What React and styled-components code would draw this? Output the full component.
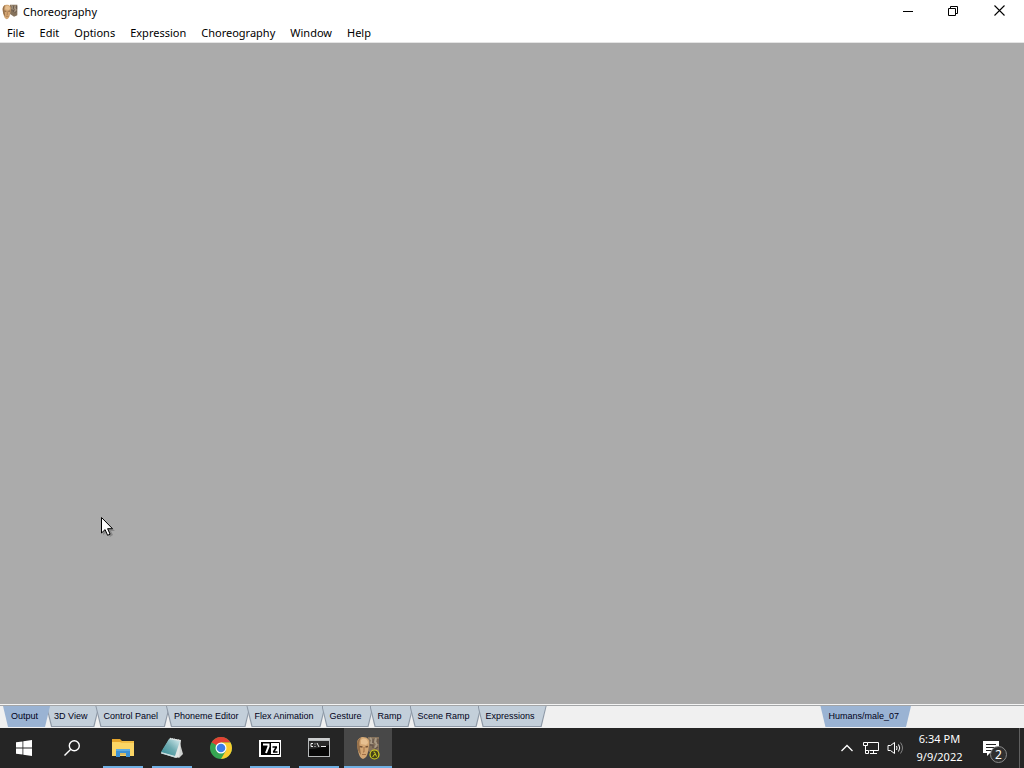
import React, { useState } from 'react';
import styled, { createGlobalStyle } from 'styled-components';

const GlobalStyle = createGlobalStyle`
  * {
    box-sizing: border-box;
  }
  body {
    margin: 0;
    overflow: hidden;
  }
  button {
    margin: 0;
    padding: 0;
    border: none;
    background: none;
    font: inherit;
    color: inherit;
  }
  svg {
    display: block;
  }
`;

const Desktop = styled.div`
  display: flex;
  flex-direction: column;
  height: 100vh;
  font-family: 'Noto Sans', 'Open Sans', sans-serif;
  font-size: 11px;
  color: #000;
  background: #fff;
`;

/* Title bar */

const TitleBar = styled.header`
  display: flex;
  align-items: center;
  height: 23px;
  padding: 0 1px 0 2px;
`;

const Title = styled.h1`
  flex: 1;
  margin: 0 0 0 5px;
  font-size: 11px;
  font-weight: 400;
  line-height: 22px;
`;

const WindowButton = styled.button`
  display: flex;
  justify-content: center;
  align-items: center;
  align-self: flex-start;
  width: ${props => props.$width || 45}px;
  height: 21px;
  &:hover {
    background: #e5e5e5;
  }
`;

const MenuBar = styled.nav`
  display: flex;
  gap: 1px;
  height: 20px;
  border-bottom: 1px solid #e4e4e4;
`;

const MenuItem = styled.button`
  padding: 0 7px;
  line-height: 19px;
  &:hover {
    background: #e5f3ff;
  }
`;

/* Work area */

const Workspace = styled.main`
  position: relative;
  flex: 1;
  background: #ababab;
`;

const Pointer = styled.svg`
  position: absolute;
  left: 100px;
  top: 473px;
`;

const TabStrip = styled.div`
  display: flex;
  justify-content: space-between;
  height: 24px;
  padding: 0 113px 0 3px;
  border-top: 1px solid #f4f4f4;
  background: #f0f0f0;
  box-shadow: inset 0 1px 0 #a4a6a8;
`;

const TabGroup = styled.div`
  display: flex;
  height: 22px;
  padding-top: 1px;
`;

const Tab = styled.button`
  position: relative;
  height: 21px;
  padding: 0 12px 2px 8px;
  margin-right: ${props => (props.$last ? 0 : -4)}px;
  font-family: 'Liberation Sans', Arial, sans-serif;
  font-size: 9px;
  line-height: 18px;
  white-space: nowrap;
  color: #000018;
  background: ${props => (props.$active ? '#9ab3d3' : '#8d98a6')};
  clip-path: polygon(0 0, 100% 0, calc(100% - 5px) 100%, 5px 100%);
  z-index: ${props => (props.$active ? 1 : 0)};
  isolation: isolate;

  &::before {
    content: '';
    position: absolute;
    inset: 0 1px 1px 1px;
    z-index: -1;
    background: ${props => (props.$active ? '#9ab3d3' : '#c3cfda')};
    clip-path: polygon(0 0, 100% 0, calc(100% - 5px) 100%, 5px 100%);
  }
`;

/* Taskbar */

const Taskbar = styled.footer`
  display: flex;
  justify-content: space-between;
  height: 40px;
  color: #fff;
  background: #252525;
`;

const Apps = styled.div`
  display: flex;
`;

const Pinned = styled.div`
  display: flex;
  gap: 1px;
  margin-left: 3px;
`;

const TaskButton = styled.button`
  display: flex;
  justify-content: center;
  align-items: center;
  width: 48px;
  height: 40px;
  background: ${props => (props.$active ? '#484848' : 'transparent')};
  background-image: ${props =>
    props.$open || props.$active ? 'linear-gradient(#70b0e4, #70b0e4)' : 'none'};
  background-size: ${props => (props.$active ? '48px' : '40px')} 2px;
  background-position: bottom center;
  background-repeat: no-repeat;
`;

const Tray = styled.div`
  display: flex;
  align-items: center;
`;

const TrayButton = styled.button`
  display: flex;
  justify-content: center;
  align-items: center;
  width: 24px;
  height: 40px;
`;

const Clock = styled.button`
  width: 65px;
  line-height: 18px;
  text-align: center;
  white-space: nowrap;
`;

const Notifications = styled.button`
  position: relative;
  display: flex;
  align-items: center;
  width: 47px;
  height: 40px;
  padding-left: 11px;
`;

const Badge = styled.span`
  position: absolute;
  left: 18px;
  top: 18px;
  width: 17px;
  height: 17px;
  border: 1px solid #8a8a8a;
  border-radius: 50%;
  background: #303030;
  font-size: 12px;
  line-height: 15px;
  text-align: center;
`;

const ShowDesktop = styled.button`
  width: 5px;
  height: 40px;
  border-left: 1px solid #606060;
`;

const FaceIcon = ({ size, badge }) => (
  <svg width={size} height={size} viewBox="0 0 24 24">
    <path d="M12 1h11v16l-5 2-6-4z" fill="#85725c" />
    <path d="M14 2l2 2-1 3 2 2M20 2l-1 4 2 2-2 4" fill="none" stroke="#a99a86" strokeWidth="1.8" />
    <path d="M17 3v4M22 3v5M14 9h3v3M19 13l3-2" fill="none" stroke="#64534a" strokeWidth="1.3" />
    <path d="M1 8C1 3 4 1 7 1c5 0 7 3 6 8l-1 7c-1 4-2 6-5 7-3-1-4-4-5-8z" fill="#d3a673" />
    <path d="M1 8c0-3 2-6 4-6-2 3-2 6-1 10l1 7c-3-3-4-7-4-11z" fill="#96704a" />
    <path d="M5 4c3-3 7-1 7 3l-2 2-5-1z" fill="#e6bf90" />
    <path d="M3.500 10.500l3 .5M9.500 11l2.500-.5" stroke="#785437" strokeWidth="1.3" />
    <path d="M8 11v5H7M6 18.500h4" fill="none" stroke="#a27047" />
    {badge && (
      <g fill="none" stroke="#d6d51d">
        <circle cx="18.5" cy="18.5" r="4.5" fill="#45421b" strokeWidth="1.2" />
        <path d="M17.500 16h1l2 4.500M18.700 18l-2 3" />
      </g>
    )}
  </svg>
);

const MinimizeIcon = () => (
  <svg width="10" height="10" viewBox="0 0 10 10">
    <path d="M0 5.500h10" stroke="#000" />
  </svg>
);

const RestoreIcon = () => (
  <svg width="10" height="10" viewBox="0 0 10 10" fill="none" stroke="#000">
    <path d="M.5 2.500h7v7h-7zM2.500 2.500v-2h7v7h-2" />
  </svg>
);

const CloseIcon = () => (
  <svg width="11" height="11" viewBox="0 0 11 11">
    <path d="M.5.5l10 10M10.500.5l-10 10" stroke="#000" strokeWidth="1.1" />
  </svg>
);

const StartIcon = () => (
  <svg width="16" height="16" viewBox="0 0 16 16" fill="#fff">
    <path d="M0 2.300L6.500 1.400v6.200H0zM7.300 1.300L16 0v7.600H7.300zM0 8.400h6.500v6.200L0 13.700zM7.300 8.400H16V16l-8.700-1.300z" />
  </svg>
);

const SearchIcon = () => (
  <svg width="16" height="16" viewBox="0 0 16 16" fill="none" stroke="#fff" strokeWidth="1.4">
    <circle cx="10.300" cy="5.700" r="5" />
    <path d="M6.800 9.200L.5 15.500" />
  </svg>
);

const FolderIcon = () => (
  <svg width="24" height="24" viewBox="0 0 24 24">
    <path d="M1 3h8l2 2h12v14H1z" fill="#e5a52c" />
    <path d="M1 6h22v14H1z" fill="#fbd565" />
    <path d="M11 5h12v2H9z" fill="#f2bd45" />
    <path d="M5 13h14v8h-4v-4H9v4H5z" fill="#3c91d4" />
    <path d="M5 13h14v2H5z" fill="#5eabe0" />
    <path d="M9 17h6v2H9z" fill="#d8b964" />
  </svg>
);

const NotepadIcon = () => (
  <svg width="24" height="24" viewBox="0 0 24 24">
    <defs>
      <linearGradient id="page" x1="0" y1="1" x2="1" y2="0">
        <stop offset="0" stopColor="#328b94" />
        <stop offset=".5" stopColor="#6daab0" />
        <stop offset="1" stopColor="#d7edf0" />
      </linearGradient>
    </defs>
    <path d="M19 4l4 14-4 4-3-2z" fill="#cfd2d0" />
    <path d="M1 17l15 5 3-1 2-17-11-2z" fill="#e3e7e5" />
    <path d="M9 3l11 2-5 15L1 16z" fill="url(#page)" />
    <path d="M10 2.500l10 2" stroke="#d6dede" strokeWidth="1.5" strokeDasharray="1 1" />
    <path d="M1 17l14 4" stroke="#c4dcdf" />
  </svg>
);

const ChromeIcon = () => (
  <svg width="24" height="24" viewBox="0 0 24 24">
    <circle cx="12" cy="12" r="11" fill="#36a552" />
    <path d="M12 12L2.500 6.500A11 11 0 0 1 21.500 6.500H12z" fill="#e34133" />
    <path d="M12 6.500h9.500A11 11 0 0 1 12 23l5-8.500z" fill="#fccc2e" />
    <path d="M2.500 6.500L7.200 14.700 12 12z" fill="#36a552" />
    <circle cx="12" cy="12" r="5.500" fill="#fff" />
    <circle cx="12" cy="12" r="4.300" fill="#3d7de8" />
  </svg>
);

const SevenZipIcon = () => (
  <svg width="24" height="24" viewBox="0 0 24 24">
    <path d="M1 4h22v17H1z" fill="#fff" />
    <path d="M3 6h10v13H3z" fill="#000" />
    <path d="M5 8.500h5.500v2L8 17" fill="none" stroke="#fff" strokeWidth="2" />
    <path d="M13 6.500h8.500v12H13" fill="none" stroke="#000" />
    <path d="M14.500 11h4.500M18.500 11l-3 5M15 16h4.500" fill="none" stroke="#000" strokeWidth="1.6" />
  </svg>
);

const ConsoleIcon = () => (
  <svg width="24" height="24" viewBox="0 0 24 24">
    <path d="M1 2h22v19H1z" fill="#b7babb" />
    <path d="M2 5h20v15H2z" fill="#080808" />
    <path d="M2 3h20" stroke="#e3e3e3" />
    <path d="M2 13c7 0 14-2 20-4V5H2z" fill="#292929" />
    <path d="M6 7.500H4v3h2M8 7.500v1M8 10v1M10 7l2 4M14 10.500h5" fill="none" stroke="#eee" />
  </svg>
);

const ChevronIcon = () => (
  <svg width="14" height="8" viewBox="0 0 14 8">
    <path d="M1.500 7L7 1.500 12.500 7" fill="none" stroke="#fff" strokeWidth="1.3" />
  </svg>
);

const NetworkIcon = () => (
  <svg width="16" height="16" viewBox="0 0 16 16" fill="none" stroke="#fff">
    <path d="M4.500 2.500h11v8h-9M10.500 10.500v3M7 13.500h7" />
    <path d="M.5 2.500h4v3h-4zM2.500 5.500v8h3v-3h-3" />
  </svg>
);

const VolumeIcon = () => (
  <svg width="16" height="16" viewBox="0 0 16 16" fill="none" stroke="#fff">
    <path d="M1 5.500h2.500l4-3v11l-4-3H1z" />
    <path d="M9.500 6q1 2 0 4M11.500 4.500q2.500 3.500 0 7" />
    <path d="M13.500 2.500q4 5.500 0 11" stroke="#858585" />
  </svg>
);

const MessageIcon = () => (
  <svg width="16" height="17" viewBox="0 0 16 17">
    <path d="M0 1h16v12H7l-3 3v-3H0z" fill="#fff" />
    <path d="M3 4.500h10M3 7.500h10M3 10.500h6" stroke="#252525" />
  </svg>
);

const menus = ['File', 'Edit', 'Options', 'Expression', 'Choreography', 'Window', 'Help'];

const tools = [
  'Output',
  '3D View',
  'Control Panel',
  'Phoneme Editor',
  'Flex Animation',
  'Gesture',
  'Ramp',
  'Scene Ramp',
  'Expressions',
];

const apps = [
  { name: 'File Explorer', icon: <FolderIcon />, open: true },
  { name: 'Notepad', icon: <NotepadIcon />, open: true },
  { name: 'Google Chrome', icon: <ChromeIcon /> },
  { name: '7-Zip', icon: <SevenZipIcon />, open: true },
  { name: 'Command Prompt', icon: <ConsoleIcon />, open: true },
  { name: 'Choreography', icon: <FaceIcon size={24} badge />, active: true },
];

const App = () => {
  const [tool, setTool] = useState('Output');

  return (
    <Desktop>
      <GlobalStyle />
      <TitleBar>
        <FaceIcon size={16} />
        <Title>Choreography</Title>
        <WindowButton aria-label="Minimize"><MinimizeIcon /></WindowButton>
        <WindowButton aria-label="Restore"><RestoreIcon /></WindowButton>
        <WindowButton aria-label="Close" $width={48}><CloseIcon /></WindowButton>
      </TitleBar>
      <MenuBar>
        {menus.map(menu => (
          <MenuItem key={menu}>{menu}</MenuItem>
        ))}
      </MenuBar>

      <Workspace>
        <Pointer width="16" height="22" viewBox="0 0 16 22">
          <path d="M3 4v15l4-3 3 5 3-2-2-4h4z" fill="#000" opacity=".2" />
          <path d="M1.500 1.500v15.500l3.600-3.400 2.500 5.700 2.500-1.100-2.500-5.500h4.900z" fill="#fff" stroke="#000" />
        </Pointer>
      </Workspace>

      <TabStrip>
        <TabGroup>
          {tools.map(name => (
            <Tab key={name} $active={name === tool} onClick={() => setTool(name)}>
              {name}
            </Tab>
          ))}
        </TabGroup>
        <TabGroup>
          <Tab $active $last>Humans/male_07</Tab>
        </TabGroup>
      </TabStrip>

      <Taskbar>
        <Apps>
          <TaskButton aria-label="Start"><StartIcon /></TaskButton>
          <TaskButton aria-label="Search"><SearchIcon /></TaskButton>
          <Pinned>
            {apps.map(app => (
              <TaskButton key={app.name} aria-label={app.name} $open={app.open} $active={app.active}>
                {app.icon}
              </TaskButton>
            ))}
          </Pinned>
        </Apps>
        <Tray>
          <TrayButton aria-label="Show hidden icons"><ChevronIcon /></TrayButton>
          <TrayButton aria-label="Network"><NetworkIcon /></TrayButton>
          <TrayButton aria-label="Volume"><VolumeIcon /></TrayButton>
          <Clock>
            6:34 PM
            <br />
            9/9/2022
          </Clock>
          <Notifications aria-label="2 notifications">
            <MessageIcon />
            <Badge>2</Badge>
          </Notifications>
          <ShowDesktop aria-label="Show desktop" />
        </Tray>
      </Taskbar>
    </Desktop>
  );
};

export default App;
